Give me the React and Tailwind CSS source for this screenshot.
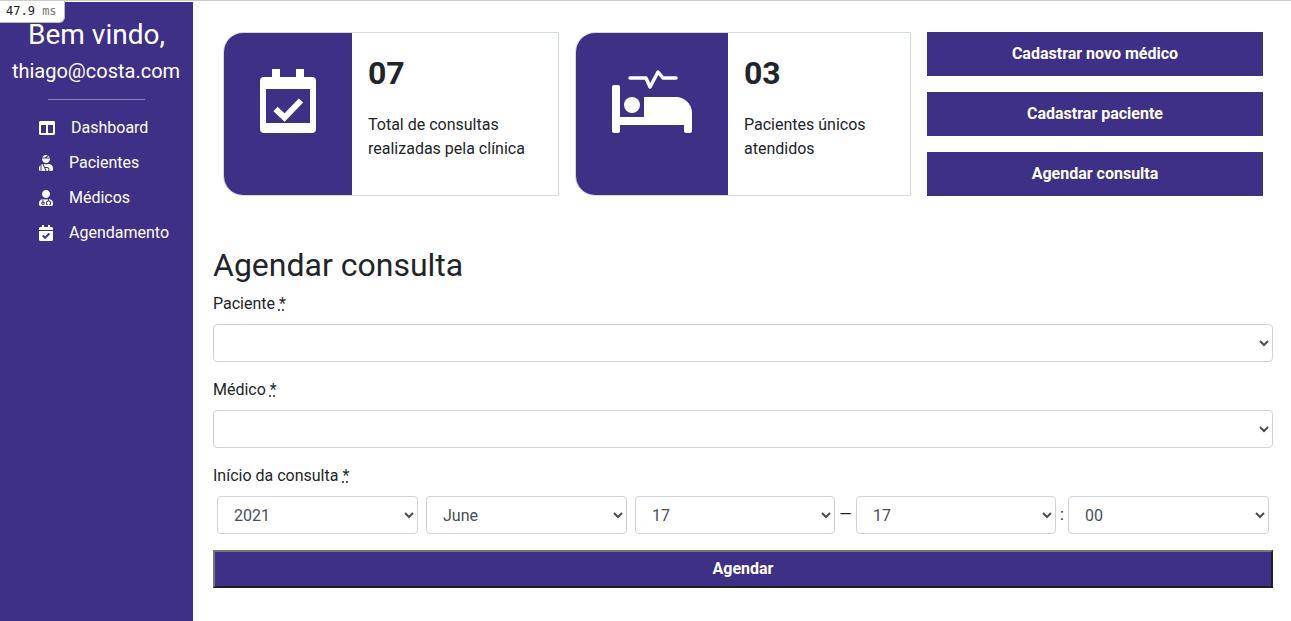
import { FaColumns, FaUserInjured, FaUserMd, FaCalendarCheck } from 'react-icons/fa';

const navItems = [
  { label: 'Dashboard', icon: FaColumns, iconWidth: 'w-4' },
  { label: 'Pacientes', icon: FaUserInjured, iconWidth: 'w-3.5' },
  { label: 'Médicos', icon: FaUserMd, iconWidth: 'w-3.5' },
  { label: 'Agendamento', icon: FaCalendarCheck, iconWidth: 'w-3.5' },
];

function CalendarIcon() {
  return (
    <svg width="56" height="64" viewBox="0 0 56 64" fill="none">
      <path
        fill="#fff"
        fillRule="evenodd"
        d="M12 0h8v8h16V0h8v8h8a4 4 0 0 1 4 4v48a4 4 0 0 1-4 4H4a4 4 0 0 1-4-4V12a4 4 0 0 1 4-4h8V0ZM6 20v34h44V20H6Z"
      />
      <polyline points="15.5,40 24.5,48.5 41,31.5" stroke="#fff" strokeWidth="6" />
    </svg>
  );
}

function BedIcon() {
  return (
    <svg width="80" height="64" viewBox="0 0 80 64" fill="none">
      <rect x="0" y="16" width="8" height="48" rx="2" fill="#fff" />
      <rect x="6" y="48" width="70" height="8" fill="#fff" />
      <rect x="72" y="44" width="8" height="20" rx="2" fill="#fff" />
      <path d="M32 28h32a16 16 0 0 1 16 16v6H32V28Z" fill="#fff" />
      <circle cx="20" cy="36" r="8" fill="#fff" />
      <polyline
        points="18,9 34,9 38,18 46,3 51,9 64,9"
        stroke="#fff"
        strokeWidth="3.5"
        strokeLinecap="round"
        strokeLinejoin="round"
      />
    </svg>
  );
}

function StatCard({ panelWidth, icon, value, lines }) {
  return (
    <div className="flex h-[164px] border border-[#cfdcd9] rounded-l-[20px] bg-white">
      <div className={`${panelWidth} shrink-0 bg-[#3f3087] rounded-l-[19px] flex justify-center items-start pt-9`}>
        {icon}
      </div>
      <div className="pl-4 pt-[21px]">
        <h2 className="text-[32px] leading-[38px] font-bold text-[#212529] mb-[21px]">{value}</h2>
        <p className="text-base leading-6 text-[#212529]">
          {lines[0]}
          <br />
          {lines[1]}
        </p>
      </div>
    </div>
  );
}

function Label({ children }) {
  return (
    <label className="block h-6 mb-2 text-base leading-6 text-[#212529]">
      {children} <abbr title="obrigatório">*</abbr>
    </label>
  );
}

function DateSelect({ width, value }) {
  return (
    <select
      defaultValue={value}
      className={`${width} h-[38px] shrink-0 pl-3 pr-1 bg-white border border-[#ced4da] rounded text-base text-[#495057]`}
    >
      <option>{value}</option>
    </select>
  );
}

export default function App() {
  return (
    <div className="relative h-screen overflow-hidden bg-white font-[Roboto,sans-serif] border-t border-[#cccccc]">
      {/* Timing badge */}
      <div className="absolute top-0 left-0 w-[65px] h-[22px] pl-[6px] leading-[21px] bg-white border-r border-b border-[#bbb] rounded-br-md font-['DejaVu_Sans_Mono',monospace] text-xs text-[#222]">
        47.9 <span className="text-[#777]">ms</span>
      </div>

      <div className="flex h-full pt-px">
        <aside className="w-[193px] shrink-0 bg-[#3f3087] text-white">
          <div className="pt-[14px] text-center">
            <h3 className="text-[28px] leading-[38px]">Bem vindo,</h3>
            <h5 className="mt-[5px] pr-px text-xl leading-6">thiago@costa.com</h5>
          </div>
          <hr className="w-[97px] mx-auto mt-[16px] border-t border-white/40" />
          <nav className="mt-[10px] pl-[39px] flex flex-col">
            {navItems.map((item) => (
              <a key={item.label} href="#" className="flex items-center gap-4 h-[35px] text-base">
                <span className={`${item.iconWidth} flex justify-center shrink-0`}>
                  <item.icon size={16} className="shrink-0" />
                </span>
                <span>{item.label}</span>
              </a>
            ))}
          </nav>
        </aside>

        <main className="flex-1 pl-5 pr-[18px] pt-[30px]">
          <div className="grid grid-cols-3 gap-4 px-[10px]">
            <StatCard
              panelWidth="w-[128px]"
              icon={<CalendarIcon />}
              value="07"
              lines={['Total de consultas', 'realizadas pela clínica']}
            />
            <StatCard
              panelWidth="w-[152px]"
              icon={<BedIcon />}
              value="03"
              lines={['Pacientes únicos', 'atendidos']}
            />
            <div className="flex flex-col gap-4">
              {['Cadastrar novo médico', 'Cadastrar paciente', 'Agendar consulta'].map((text) => (
                <button key={text} className="h-11 bg-[#3f3087] text-white font-bold text-base">
                  {text}
                </button>
              ))}
            </div>
          </div>

          <h2 className="mt-[50px] mb-2 text-[32px] leading-[38px] text-[#212529]">Agendar consulta</h2>
          <form>
            <div className="mb-4">
              <Label>Paciente</Label>
              <select className="block w-full h-[38px] pl-3 pr-1 bg-white border border-[#ced4da] rounded text-base text-[#495057]">
                <option></option>
              </select>
            </div>
            <div className="mb-4">
              <Label>Médico</Label>
              <select className="block w-full h-[38px] pl-3 pr-1 bg-white border border-[#ced4da] rounded text-base text-[#495057]">
                <option></option>
              </select>
            </div>
            <div className="mb-4">
              <Label>Início da consulta</Label>
              <div className="flex items-center px-1 text-[#212529]">
                <DateSelect width="w-[201px]" value="2021" />
                <span className="w-2 shrink-0" />
                <DateSelect width="w-[201px]" value="June" />
                <span className="w-2 shrink-0" />
                <DateSelect width="w-[200px]" value="17" />
                <span className="w-[21px] shrink-0 text-center">—</span>
                <DateSelect width="w-[200px]" value="17" />
                <span className="w-3 shrink-0 text-center">:</span>
                <DateSelect width="w-[201px]" value="00" />
              </div>
            </div>
            <button
              type="button"
              className="block w-full h-[38px] bg-[#3f3087] text-white font-bold text-base border-2 border-t-[#767676] border-l-[#767676] border-b-[#212121] border-r-[#212121]"
            >
              Agendar
            </button>
          </form>
        </main>
      </div>
    </div>
  );
}
